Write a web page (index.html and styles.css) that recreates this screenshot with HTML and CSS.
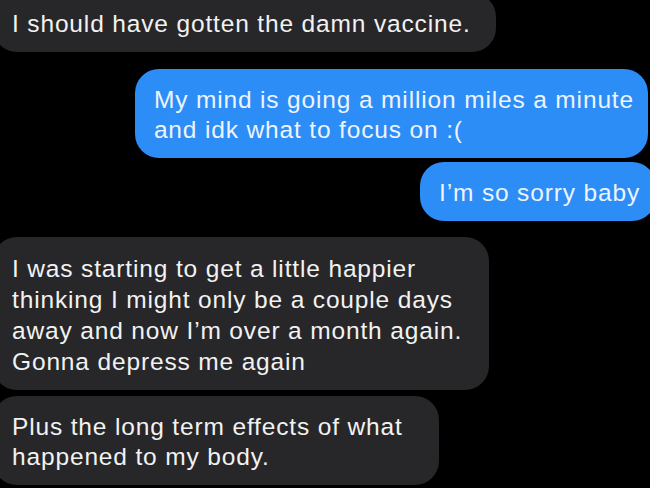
FILE: index.html
```html
<!DOCTYPE html>
<html lang="en">
<head>
    <meta charset="UTF-8">
    <meta name="viewport" content="width=device-width, initial-scale=1.0">
    <title>Messages</title>
    <link rel="stylesheet" href="styles.css">
</head>
<body>
    <div class="thread">
        <div class="bubble received first">I should have gotten the damn vaccine.</div>
        <div class="bubble sent two-line">My mind is going a million miles a minute<br>and idk what to focus on :(</div>
        <div class="bubble sent short">I’m so sorry baby</div>
        <div class="bubble received group-start">I was starting to get a little happier<br>thinking I might only be a couple days<br>away and now I’m over a month again.<br>Gonna depress me again</div>
        <div class="bubble received group-next">Plus the long term effects of what<br>happened to my body.</div>
    </div>
</body>
</html>
```

FILE: styles.css
```css
html, body {
    margin: 0;
    padding: 0;
    background: #000;
    height: 100%;
    overflow: hidden;
}
body {
    font-family: "Liberation Sans", Arial, sans-serif;
    font-size: 24.5px;
    letter-spacing: 0.85px;
    line-height: 30px;
    -webkit-font-smoothing: antialiased;
}
.thread {
    display: flex;
    flex-direction: column;
    margin-top: -7px;
}
.bubble {
    padding: 16px 25px 13px 19px;
    border-radius: 24px;
    white-space: nowrap;
}
.received {
    align-self: flex-start;
    margin-left: -7px;
    background: #272729;
    color: #f2f2f2;
}
.sent {
    align-self: flex-end;
    background: #2c8df6;
    color: #eef4ff;
}
.two-line {
    margin-top: 17px;
    margin-right: 2px;
    padding-right: 14px;
}
.short {
    margin-top: 4px;
    margin-right: -6px;
    padding-right: 16px;
}
.group-start {
    margin-top: 16px;
    line-height: 31px;
    padding-right: 27px;
}
.group-next {
    margin-top: 6px;
    padding-right: 36px;
}
```
